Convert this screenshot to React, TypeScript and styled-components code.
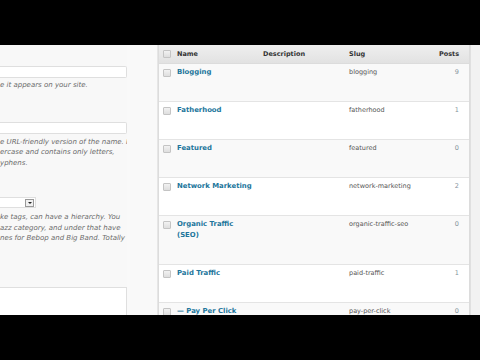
import React from "react";
import styled, { createGlobalStyle } from "styled-components";

const Global = createGlobalStyle`
  html, body { margin: 0; padding: 0; background: #000; }
  body { font-family: "DejaVu Sans", Verdana, sans-serif; }
  * { box-sizing: border-box; }
`;

const Screen = styled.div`
  width: 480px;
  height: 360px;
  background: #000;
  padding-top: 45px;
  overflow: hidden;
`;

const Frame = styled.div`
  width: 480px;
  height: 270px;
  display: flex;
  background: #f9f9f9;
  overflow: hidden;
  font-size: 6.5px;
`;

const LeftPanel = styled.div`
  width: 158px;
  flex: none;
  display: flex;
  background: #f8f8f8;
  border-right: 1px solid #e6e6e6;
`;

const FormCol = styled.div`
  width: 127px;
  flex: none;
  display: flex;
  flex-direction: column;
`;

const Gutter = styled.div`
  flex: 1;
  background: #f9f9f9;
`;

const TextInput = styled.div<{ $top: number }>`
  flex: none;
  margin-top: ${(p) => p.$top}px;
  height: 12px;
  width: 127px;
  background: #fff;
  border: 1px solid #dfdfdf;
  border-left: none;
  border-radius: 0 2px 2px 0;
`;

const Help = styled.div<{ $top: number }>`
  flex: none;
  margin-top: ${(p) => p.$top}px;
  color: #6a6a6a;
  font-style: italic;
  font-size: 7px;
  line-height: 10.5px;
  white-space: nowrap;
`;

const Select = styled.div`
  flex: none;
  margin-top: 29px;
  width: 36px;
  height: 11px;
  background: #fff;
  border: 1px solid #dfdfdf;
  border-left: none;
  display: flex;
  justify-content: flex-end;
  align-items: center;
  padding-right: 1px;
`;

const SelectArrow = styled.div`
  width: 9px;
  height: 8px;
  border: 1px solid #999;
  background: #f0f0f0;
  display: flex;
  align-items: center;
  justify-content: center;
  &::after {
    content: "";
    border-left: 2px solid transparent;
    border-right: 2px solid transparent;
    border-top: 2px solid #222;
  }
`;

const TextArea = styled.div`
  margin-top: 43px;
  flex: 1;
  width: 127px;
  background: #fff;
  border: 1px solid #dfdfdf;
  border-left: none;
  border-bottom: none;
`;

const TablePanel = styled.div`
  width: 312px;
  flex: none;
  background: #fff;
  border-left: 1px solid #dcdcdc;
  border-right: 1px solid #dcdcdc;
  display: flex;
  flex-direction: column;
`;

const Grid = styled.div`
  flex: none;
  display: grid;
  grid-template-columns: 16px 86px 86px 86px 1fr;
`;

const HeadRow = styled(Grid)`
  height: 19px;
  align-items: center;
  background: linear-gradient(#efefef, #e2e2e2);
  border-bottom: 1px solid #dcdcdc;
  color: #333;
  font-weight: bold;
`;

const Row = styled(Grid)<{ $alt: boolean }>`
  background: ${(p) => (p.$alt ? "#f9f9f9" : "#fff")};
  border-bottom: 1px solid #e4e4e4;
  padding: 3px 0 23px;
  line-height: 11px;
`;

const Cell = styled.div<{ $right?: boolean }>`
  padding-left: ${(p) => (p.$right ? 0 : 2)}px;
  padding-right: ${(p) => (p.$right ? 10 : 0)}px;
  text-align: ${(p) => (p.$right ? "right" : "left")};
`;

const CheckCell = styled.div`
  padding-left: 4px;
  display: flex;
  align-items: flex-start;
  padding-top: 2px;
`;

const HeadCheckCell = styled(CheckCell)`
  padding-top: 0;
  align-items: center;
`;

const Check = styled.div`
  width: 8px;
  height: 8px;
  border: 1px solid #c4c4c4;
  background: linear-gradient(#f2f2f2, #dedede);
  border-radius: 1px;
`;

const NameLink = styled.a`
  color: #21759b;
  font-weight: bold;
  font-size: 6.9px;
  text-decoration: none;
  display: block;
  max-width: 80px;
`;

const Slug = styled.span`
  color: #555;
`;

const Count = styled.span`
  color: #84939c;
`;

const Scrollbar = styled.div`
  flex: 1;
  background: #f2f2f2;
  border-left: 1px solid #e0e0e0;
`;

const rows = [
  { name: "Blogging", slug: "blogging", count: 9 },
  { name: "Fatherhood", slug: "fatherhood", count: 1 },
  { name: "Featured", slug: "featured", count: 0 },
  { name: "Network Marketing", slug: "network-marketing", count: 2 },
  { name: "Organic Traffic (SEO)", slug: "organic-traffic-seo", count: 0 },
  { name: "Paid Traffic", slug: "paid-traffic", count: 1 },
  { name: "— Pay Per Click", slug: "pay-per-click", count: 0 },
];

export default function App() {
  return (
    <>
      <Global />
      <Screen>
        <Frame>
          <LeftPanel>
            <FormCol>
              <TextInput $top={21} />
              <Help $top={2}>e it appears on your site.</Help>
              <TextInput $top={31} />
              <Help $top={3}>
                e URL-friendly version of the name. It
                <br />
                ercase and contains only letters,
                <br />
                yphens.
              </Help>
              <Select>
                <SelectArrow />
              </Select>
              <Help $top={4}>
                ke tags, can have a hierarchy. You
                <br />
                azz category, and under that have
                <br />
                nes for Bebop and Big Band. Totally
              </Help>
              <TextArea />
            </FormCol>
            <Gutter />
          </LeftPanel>
          <TablePanel>
            <HeadRow>
              <HeadCheckCell>
                <Check />
              </HeadCheckCell>
              <Cell>Name</Cell>
              <Cell>Description</Cell>
              <Cell>Slug</Cell>
              <Cell $right>Posts</Cell>
            </HeadRow>
            {rows.map((r, i) => (
              <Row key={r.slug} $alt={i % 2 === 0}>
                <CheckCell>
                  <Check />
                </CheckCell>
                <Cell>
                  <NameLink>{r.name}</NameLink>
                </Cell>
                <Cell />
                <Cell>
                  <Slug>{r.slug}</Slug>
                </Cell>
                <Cell $right>
                  <Count>{r.count}</Count>
                </Cell>
              </Row>
            ))}
          </TablePanel>
          <Scrollbar />
        </Frame>
      </Screen>
    </>
  );
}
